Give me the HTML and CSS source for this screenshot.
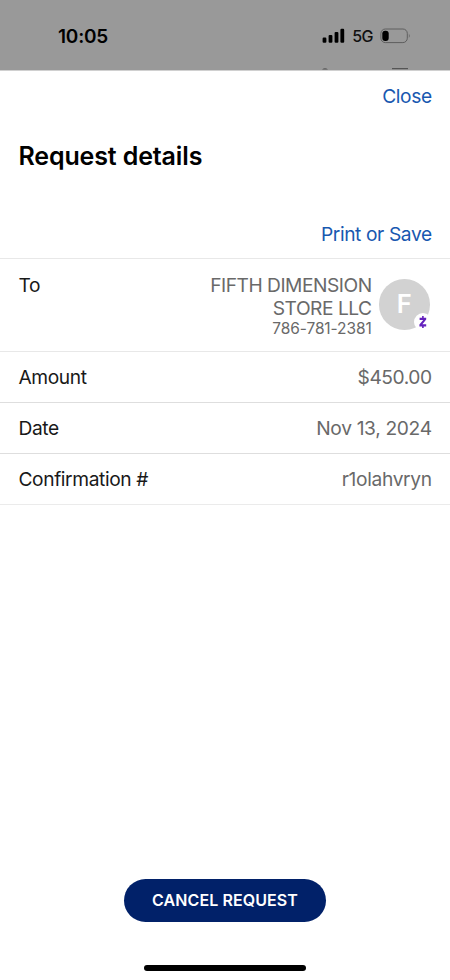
FILE: index.html
```
<!DOCTYPE html>
<html lang="en">
<head>
<meta charset="utf-8">
<meta name="viewport" content="width=device-width, initial-scale=1">
<title>Request details</title>
<link rel="stylesheet" href="styles.css">
</head>
<body>
<div class="screen">
  <header class="status">
    <span class="time">10:05</span>
    <div class="indicators">
      <svg class="signal" width="24" height="16" viewBox="0 0 24 16"><rect x="0.6" y="9.6" width="3.8" height="5.2" rx="1.1"/><rect x="6.6" y="7" width="3.8" height="7.8" rx="1.1"/><rect x="12.6" y="3.9" width="3.8" height="10.9" rx="1.1"/><rect x="18.4" y="0.8" width="3.8" height="14" rx="1.1"/></svg>
      <span class="network">5G</span>
      <svg class="battery" width="32" height="16" viewBox="0 0 32 16"><rect x="0.9" y="1" width="26.4" height="13.6" rx="4.4" fill="none" stroke="#5e5e5e" stroke-width="1"/><rect x="2.3" y="2.7" width="6.4" height="10.3" rx="2.9"/><path d="M28.9 5.5q1.6 2.3 0 4.6z" fill="#5e5e5e"/></svg>
    </div>
    <svg class="peek" width="100" height="3" viewBox="0 0 100 3"><path d="M2 2.5Q5 0 8 2.5z" fill="#555"/><rect x="72" y="1" width="16" height="1.2" fill="#555"/></svg>
  </header>
  <main class="sheet">
    <div class="close-row"><a class="link">Close</a></div>
    <h1>Request details</h1>
    <div class="print-row"><a class="link">Print or Save</a></div>
    <dl class="details">
      <div class="row recipient">
        <dt>To</dt>
        <dd class="payee">
          <div class="payee-text">
            <span class="name">FIFTH DIMENSION</span>
            <span class="name">STORE LLC</span>
            <span class="phone">786-781-2381</span>
          </div>
          <div class="avatar"><span>F</span>
            <svg class="badge" width="18" height="18" viewBox="0 0 18 18"><circle cx="9" cy="9" r="9" fill="#fff"/><path d="M5.6 4.7h6.6v1.9L8.4 11.2h3.8v2.2H5.4v-1.9l3.8-4.6H5.6zM8.1 2.9h1.6v2.2H8.1zM8.1 13h1.6v2.1H8.1z" fill="#6421bd"/></svg>
          </div>
        </dd>
      </div>
      <div class="row"><dt>Amount</dt><dd>$450.00</dd></div>
      <div class="row"><dt>Date</dt><dd class="loose">Nov 13, 2024</dd></div>
      <div class="row"><dt>Confirmation #</dt><dd class="loose">r1olahvryn</dd></div>
    </dl>
    <button class="cancel">CANCEL REQUEST</button>
    <div class="home"></div>
  </main>
</div>
</body>
</html>
```
FILE: styles.css
```
* { box-sizing: border-box; }
body { margin: 0; background: #fff; font-family: Inter, "Liberation Sans", sans-serif; }
.screen { width: 450px; height: 980px; display: flex; flex-direction: column; overflow: hidden; }
.status { position: relative; height: 71px; flex: none; background: #999; border-bottom: 1px solid #d0d0d0; display: flex; justify-content: space-between; align-items: flex-start; padding: 24px 38px 0 58px; }
.time { font-size: 19px; line-height: 25px; font-weight: 600; letter-spacing: -0.2px; }
.indicators { display: flex; align-items: center; height: 24px; }
.network { font-size: 16px; line-height: 24px; font-weight: 500; margin: 0 7px 0 6px; color: #111; letter-spacing: -0.5px; }
.peek { position: absolute; left: 320px; bottom: 0; }
.sheet { flex: 1; display: flex; flex-direction: column; }
.close-row, .print-row { display: flex; justify-content: flex-end; padding-right: 18.3px; }
.close-row { padding-top: 13px; }
.link { color: #1858b0; font-size: 19.2px; line-height: 24px; letter-spacing: -0.4px; }
h1 { margin: 33px 0 0 18.5px; font-size: 25px; line-height: 30px; font-weight: 600; letter-spacing: -0.14px; }
.print-row { height: 88px; padding-top: 51px; border-bottom: 1px solid #e8e8e8; }
.details { margin: 0; }
.row { height: 51px; padding: 0 18.3px 0 18.5px; border-bottom: 1px solid #dedede; display: flex; justify-content: space-between; align-items: center; font-size: 19.2px; line-height: 24px; }
.row:last-child { border-color: #ebebeb; }
dt { color: #191919; letter-spacing: -0.4px; }
dd { margin: 0; color: #696969; letter-spacing: -0.44px; }
.loose { letter-spacing: -0.34px; }
.recipient { height: 93px; align-items: flex-start; padding: 14px 20.5px 0 18.5px; border-color: #e8e8e8; }
.payee { display: flex; }
.payee-text { display: flex; flex-direction: column; align-items: flex-end; padding-top: 1px; margin-right: 7.4px; }
.name { line-height: 23px; letter-spacing: -0.49px; }
.phone { font-size: 15.5px; line-height: 18px; letter-spacing: -0.1px; }
.avatar { position: relative; width: 50.5px; height: 50.5px; margin-top: 6px; border-radius: 50%; background: #d2d2d2; color: #fff; display: flex; align-items: center; justify-content: center; font-size: 25.5px; font-weight: 600; letter-spacing: 0; }
.badge { position: absolute; right: -2px; bottom: -1.5px; }
.cancel { width: 202px; height: 43px; margin: auto auto 0; padding: 0 0 1px; border: 0; border-radius: 22px; background: #012169; color: #fff; font: 600 16px/20px Inter, sans-serif; letter-spacing: 0.08px; }
.home { width: 162px; height: 6px; flex: none; margin: 43px auto 9px; border-radius: 3px; background: #000; }
```
